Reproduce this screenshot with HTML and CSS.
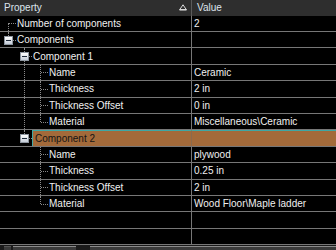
FILE: index.html
```html
<!DOCTYPE HTML>
<html lang="en">

<head>
  <meta charset="UTF-8">
  <title>Property Grid</title>
  <link rel="stylesheet" href="styles.css">
</head>

<body>
  <div class="grid">

    <div class="head">
      <div class="hname">
        <span>Property</span>
        <svg class="sort" width="8" height="7" viewBox="0 0 8 7">
          <polygon points="4,0.8 7.3,5.6 0.7,5.6" fill="none" stroke="#d8d8d8" stroke-width="1"/>
          <rect x="0.5" y="5" width="7" height="1.5" fill="#d8d8d8"/>
        </svg>
      </div>
      <div class="hvalue">Value</div>
    </div>

    <!-- level 0 -->
    <div class="row">
      <div class="name"><span class="g down h"></span><span class="label">Number of components</span></div>
      <div class="value">2</div>
    </div>
    <div class="row">
      <div class="name"><span class="g up"><i class="box"></i></span><span class="label">Components</span></div>
      <div class="value"></div>
    </div>

    <!-- component 1 -->
    <div class="row">
      <div class="name"><span class="g"></span><span class="g v"><i class="box"></i></span><span class="label">Component 1</span></div>
      <div class="value"></div>
    </div>
    <div class="row">
      <div class="name"><span class="g"></span><span class="g v"></span><span class="g v h"></span><span class="label">Name</span></div>
      <div class="value">Ceramic</div>
    </div>
    <div class="row">
      <div class="name"><span class="g"></span><span class="g v"></span><span class="g v h"></span><span class="label">Thickness</span></div>
      <div class="value">2 in</div>
    </div>
    <div class="row">
      <div class="name"><span class="g"></span><span class="g v"></span><span class="g v h"></span><span class="label">Thickness Offset</span></div>
      <div class="value">0 in</div>
    </div>
    <div class="row">
      <div class="name"><span class="g"></span><span class="g v"></span><span class="g up h"></span><span class="label">Material</span></div>
      <div class="value">Miscellaneous\Ceramic</div>
    </div>

    <!-- component 2 (selected) -->
    <div class="row selected">
      <div class="name"><span class="g"></span><span class="g up"><i class="box"></i></span><span class="label">Component 2</span></div>
      <div class="value"></div>
    </div>
    <div class="row">
      <div class="name"><span class="g"></span><span class="g"></span><span class="g v h"></span><span class="label">Name</span></div>
      <div class="value">plywood</div>
    </div>
    <div class="row">
      <div class="name"><span class="g"></span><span class="g"></span><span class="g v h"></span><span class="label">Thickness</span></div>
      <div class="value">0.25 in</div>
    </div>
    <div class="row">
      <div class="name"><span class="g"></span><span class="g"></span><span class="g v h"></span><span class="label">Thickness Offset</span></div>
      <div class="value">2 in</div>
    </div>
    <div class="row">
      <div class="name"><span class="g"></span><span class="g"></span><span class="g up h"></span><span class="label">Material</span></div>
      <div class="value">Wood Floor\Maple ladder</div>
    </div>

    <div class="row">
      <div class="name"></div>
      <div class="value"></div>
    </div>
    <div class="row">
      <div class="name"></div>
      <div class="value"></div>
    </div>

    <div class="foot">
      <span class="seg s1"></span>
      <span class="seg s2"></span>
      <span class="seg s3"></span>
    </div>
  </div>
</body>

</html>
```

FILE: styles.css
```css
* {
  box-sizing: border-box;
}

body {
  margin: 0;
  background-color: black;
  overflow: hidden;
  width: 336px;
  height: 250px;
  font-family: "Liberation Sans", Arial, sans-serif;
  font-size: 10px;
  color: #f0f0f0;
}

.grid {
  display: flex;
  flex-direction: column;
  width: 336px;
  height: 250px;
}

/* header */
.head {
  display: flex;
  height: 15.6px;
  background-color: #2e2e2e;
  color: #dde4ec;
  flex-shrink: 0;
}

.hname {
  width: 191px;
  display: flex;
  align-items: center;
  justify-content: space-between;
  padding: 0 4px 0 4px;
}

.sort {
  display: block;
  margin-bottom: 1px;
}

.hvalue {
  flex: 1;
  display: flex;
  align-items: center;
  padding-left: 5px;
  border-left: 1px solid #5a5a5a;
}

/* rows */
.row {
  display: flex;
  height: 16.4px;
  border-bottom: 1px solid #777;
  flex-shrink: 0;
}

.name {
  width: 191px;
  display: flex;
  align-items: stretch;
}

.value {
  flex: 1;
  display: flex;
  align-items: center;
  padding-left: 2px;
  border-left: 1px solid #777;
  white-space: nowrap;
}

.label {
  display: flex;
  align-items: center;
  padding-left: 1px;
  white-space: nowrap;
}

/* tree guides */
.g {
  position: relative;
  width: 16px;
  flex-shrink: 0;
}

.g::before,
.g::after {
  content: "";
  position: absolute;
}

.g.v::before {
  left: 8px;
  top: 0;
  bottom: 0;
  border-left: 1px dotted #8a8a8a;
}

.g.up::before {
  left: 8px;
  top: 0;
  height: 50%;
  border-left: 1px dotted #8a8a8a;
}

.g.down::before {
  left: 8px;
  top: 50%;
  bottom: 0;
  border-left: 1px dotted #8a8a8a;
}

.g.h::after,
.g .box + .box,
.g:has(.box)::after {
  left: 9px;
  right: 0;
  top: 50%;
  border-top: 1px dotted #8a8a8a;
}

.box {
  position: absolute;
  left: 4px;
  top: 50%;
  width: 9px;
  height: 9px;
  margin-top: -4px;
  border: 1px solid #8e96a0;
  background: linear-gradient(#ffffff, #c4ccd8);
  z-index: 1;
}

.box::after {
  content: "";
  position: absolute;
  left: 1px;
  top: 3px;
  width: 5px;
  height: 1px;
  background-color: #1e2a3a;
}

/* selected row */
.selected .label {
  flex: 1;
  margin-left: 0;
  padding-left: 2px;
  background-color: #a36a3a;
  color: #141414;
  border-left: 1px solid #3fa7a4;
  border-top: 1px solid #3fa7a4;
}

.selected .value {
  background-color: #a36a3a;
  border-top: 1px solid #3fa7a4;
  border-left: 1px solid #8c6a4c;
}

/* bottom strip */
.foot {
  flex: 1;
  display: flex;
  align-items: flex-start;
  gap: 2px;
  padding: 1px 0 0 4px;
  background-color: #1a1a1a;
}

.seg {
  height: 4px;
  background-color: #3a3a3a;
  border-top: 1px solid #8a8a8a;
}

.s1 {
  width: 7px;
  border-top-color: #555;
}

.s2 {
  width: 63px;
}

.s3 {
  flex: 1;
  margin-left: 12px;
}
```
